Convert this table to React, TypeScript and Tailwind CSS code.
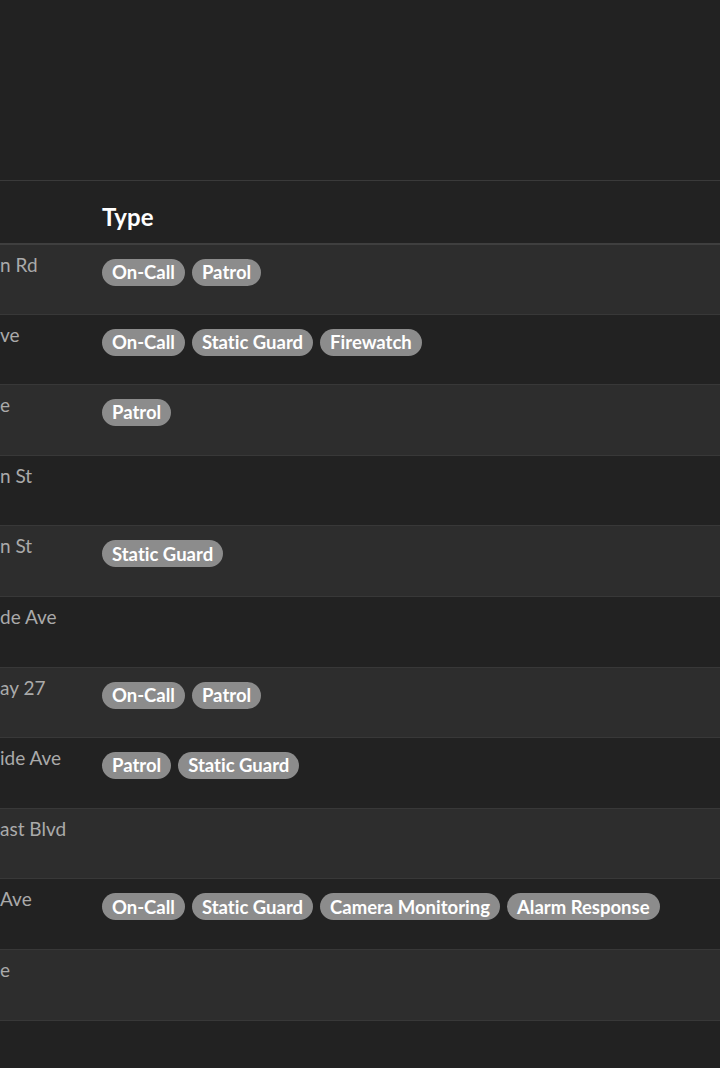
import React from 'react'

type Row = { place: string; types: string[] }

const rows: Row[] = [
  { place: 'n Rd', types: ['On-Call', 'Patrol'] },
  { place: 've', types: ['On-Call', 'Static Guard', 'Firewatch'] },
  { place: 'e', types: ['Patrol'] },
  { place: 'n St', types: [] },
  { place: 'n St', types: ['Static Guard'] },
  { place: 'de Ave', types: [] },
  { place: 'ay 27', types: ['On-Call', 'Patrol'] },
  { place: 'ide Ave', types: ['Patrol', 'Static Guard'] },
  { place: 'ast Blvd', types: [] },
  { place: 'Ave', types: ['On-Call', 'Static Guard', 'Camera Monitoring', 'Alarm Response'] },
  { place: 'e', types: [] },
]

const Badge = ({ label }: { label: string }) => (
  <span className="inline-flex h-[27px] items-center rounded-full bg-[#8c8c8c] px-[10px] text-[18.5px] font-bold leading-none text-white [font-variant-ligatures:none]">
    {label}
  </span>
)

export default function App() {
  return (
    <div className="min-h-screen overflow-hidden bg-[#222222] pt-[180px]" style={{ fontFamily: 'Lato, "Open Sans", sans-serif' }}>
      <table className="w-full table-fixed border-collapse">
        <colgroup>
          <col className="w-[86px]" />
          <col />
        </colgroup>
        <thead>
          <tr className="h-[63px] border-t border-b-2 border-t-[#3a3a3a] border-b-[#3f3f3f]">
            <th className="p-0" />
            <th className="px-4 pt-[10px] text-left align-middle text-[24px] font-bold text-white">Type</th>
          </tr>
        </thead>
        <tbody>
          {rows.map((row, i) => (
            <tr
              key={i}
              className={`h-[70.6px] border-b border-[#383838] ${i % 2 === 0 ? 'bg-[#2d2d2d]' : 'bg-[#222222]'}`}
            >
              <td className="p-0 pt-[8px] align-top text-[19px] leading-6 whitespace-nowrap text-[#aaaaaa]">
                {row.place}
              </td>
              <td className="px-4 pt-[14px] align-top">
                <div className="flex flex-wrap gap-[7px]">
                  {row.types.map((t) => (
                    <Badge key={t} label={t} />
                  ))}
                </div>
              </td>
            </tr>
          ))}
        </tbody>
      </table>
    </div>
  )
}
